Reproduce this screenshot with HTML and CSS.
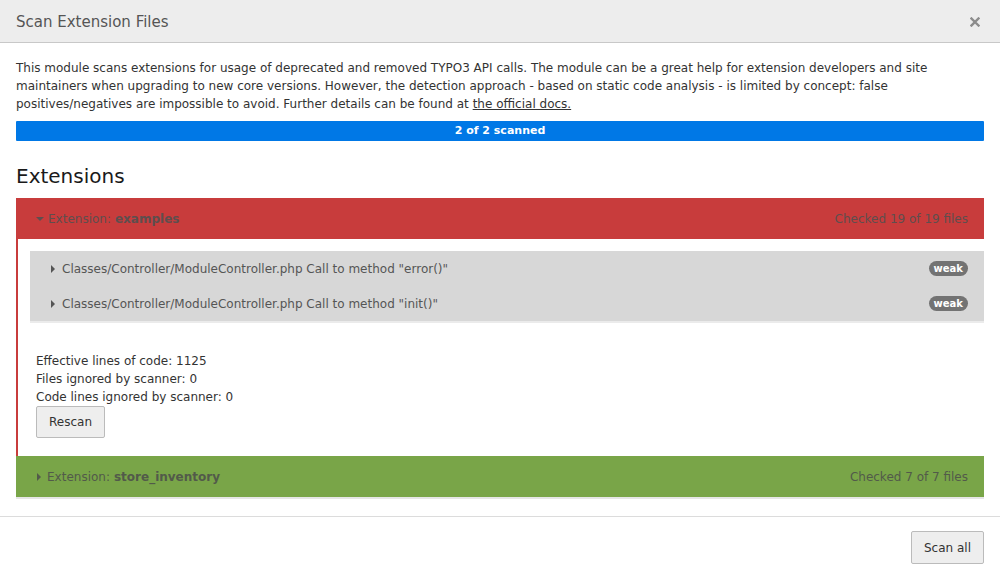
FILE: index.html
```html
<!DOCTYPE html>
<html lang="en">
<head>
<meta charset="utf-8">
<title>Scan Extension Files</title>
<link rel="stylesheet" href="styles.css">
</head>
<body>
<div class="modal">
  <div class="modal-header">
    <h4 class="modal-title">Scan Extension Files</h4>
    <button class="close" aria-label="Close">
      <svg width="10" height="10" viewBox="0 0 10 10"><path d="M1.5 1.5 L8.5 8.5 M8.5 1.5 L1.5 8.5" stroke="#8c8c8c" stroke-width="2.4" stroke-linecap="square"/></svg>
    </button>
  </div>
  <div class="modal-body">
    <p class="intro">This module scans extensions for usage of deprecated and removed TYPO3 API calls. The module can be a great help for extension developers and site maintainers when upgrading to new core versions. However, the detection approach - based on static code analysis - is limited by concept: false positives/negatives are impossible to avoid. Further details can be found at <a href="#" class="doclink">the official docs.</a></p>
    <div class="progress"><div class="progress-bar">2 of 2 scanned</div></div>
    <h3 class="section-title">Extensions</h3>

    <div class="panel panel-danger">
      <div class="panel-heading">
        <span class="ext-name"><span class="caret-down"></span>Extension: <strong>examples</strong></span>
        <span class="ext-count">Checked 19 of 19 files</span>
      </div>
      <div class="panel-body">
        <div class="findings">
          <div class="finding">
            <span class="finding-text"><span class="caret-right"></span>Classes/Controller/ModuleController.php Call to method "error()"</span>
            <span class="badge">weak</span>
          </div>
          <div class="finding">
            <span class="finding-text"><span class="caret-right"></span>Classes/Controller/ModuleController.php Call to method "init()"</span>
            <span class="badge">weak</span>
          </div>
        </div>
        <div class="stats">
          <div>Effective lines of code: 1125</div>
          <div>Files ignored by scanner: 0</div>
          <div>Code lines ignored by scanner: 0</div>
          <button class="btn">Rescan</button>
        </div>
      </div>
    </div>

    <div class="panel panel-success">
      <div class="panel-heading">
        <span class="ext-name"><span class="caret-right"></span>Extension: <strong>store_inventory</strong></span>
        <span class="ext-count">Checked 7 of 7 files</span>
      </div>
    </div>
  </div>
  <div class="modal-footer">
    <button class="btn btn-footer">Scan all</button>
  </div>
</div>
</body>
</html>
```

FILE: styles.css
```css
* { box-sizing: border-box; }
html, body { margin: 0; padding: 0; background: #fff; }
body {
  font-family: "DejaVu Sans", Verdana, sans-serif;
  font-size: 12px;
  line-height: 18px;
  color: #333;
  width: 1000px;
  height: 578px;
  overflow: hidden;
}
.modal { display: flex; flex-direction: column; }
.modal-header {
  height: 43px;
  background: #ededed;
  border-bottom: 1px solid #c8c8c8;
  display: flex;
  align-items: center;
  justify-content: space-between;
  padding: 2px 20px 0 16px;
}
.modal-title {
  margin: 0;
  font-size: 15px;
  font-weight: normal;
  color: #555;
  line-height: 20px;
}
.close {
  border: 0;
  background: transparent;
  padding: 0;
  display: flex;
  cursor: pointer;
}
.modal-body { padding: 16px 16px 0 16px; }
.intro { margin: 0 0 8px 0; }
.doclink { color: #333; text-decoration: underline; }
.progress { height: 20px; background: #eee; border-radius: 1px; overflow: hidden; }
.progress-bar {
  height: 20px;
  width: 100%;
  background: #0078e6;
  color: #fff;
  font-size: 11px;
  font-weight: bold;
  line-height: 20px;
  text-align: center;
}
.section-title {
  margin: 24px 0 11px 0;
  font-size: 20px;
  font-weight: normal;
  line-height: 22px;
  color: #1a1a1a;
}
.panel { border-bottom: 2px solid #e6e6e6; }
.panel-danger { border-bottom: 0; }
.panel-heading {
  height: 41px;
  display: flex;
  align-items: center;
  justify-content: space-between;
  padding: 0 16px 0 20px;
  font-size: 12px;
  color: #575757;
}
.panel-danger .panel-heading { background: #c83c3c; color: #5e4e4e; }
.panel-success .panel-heading { background: #79a548; color: #525a4a; }
.ext-name { display: flex; align-items: center; }
.ext-name strong { margin-left: 4px; }
.caret-down {
  display: inline-block;
  width: 0; height: 0;
  border-left: 4px solid transparent;
  border-right: 4px solid transparent;
  border-top: 4px solid currentColor;
  margin-right: 4px;
  margin-top: 1px;
}
.caret-right {
  display: inline-block;
  width: 0; height: 0;
  border-top: 4px solid transparent;
  border-bottom: 4px solid transparent;
  border-left: 4px solid currentColor;
  margin-right: 7px;
}
.panel-success .caret-right { margin-left: 1px; margin-right: 6px; }
.panel-body {
  border-left: 2px solid #c83c3c;
  padding: 12px 0 18px 12px;
}
.findings {
  background: #d7d7d7;
  border-bottom: 2px solid #ebebeb;
}
.finding {
  height: 35px;
  display: flex;
  align-items: center;
  justify-content: space-between;
  padding: 0 16px 0 21px;
  color: #555;
}
.finding-text { display: flex; align-items: center; }
.finding .caret-right { color: #555; margin-right: 7px; }
.badge {
  display: inline-block;
  background: #737373;
  color: #fff;
  font-size: 10px;
  font-weight: bold;
  line-height: 15px;
  height: 15px;
  padding: 0 5px;
  border-radius: 8px;
}
.stats { padding: 29px 0 0 6px; }
.btn {
  font-family: "DejaVu Sans", Verdana, sans-serif;
  font-size: 12px;
  color: #333;
  background: #eeeeee;
  border: 1px solid #bbbbbb;
  border-radius: 2px;
  height: 32px;
  padding: 0 12px;
  cursor: pointer;
}
.modal-footer {
  margin-top: 17px;
  border-top: 1px solid #dcdcdc;
  padding: 14px 16px 0 16px;
  display: flex;
  justify-content: flex-end;
}
.btn-footer { height: 33px; }
```
